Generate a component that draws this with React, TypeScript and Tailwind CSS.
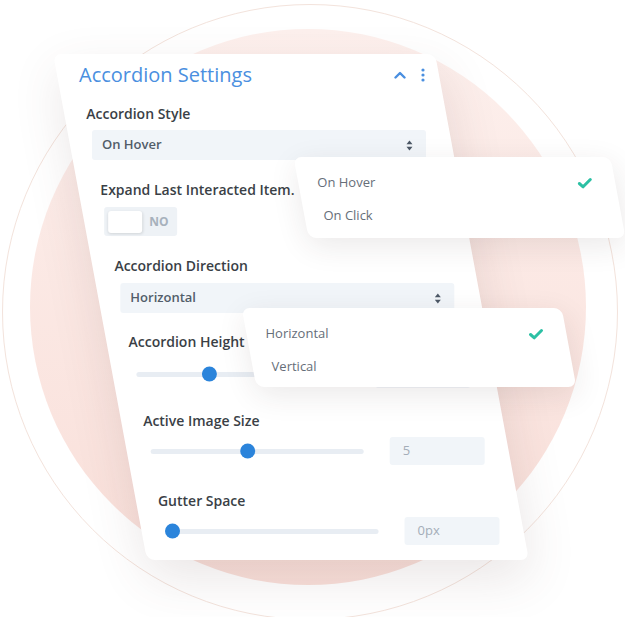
import React from 'react';

const labelCls = 'h-[20px] leading-[20px] text-[14px] font-semibold text-[#3a3f46] whitespace-nowrap skew-x-[-10.5deg]';

function SelectArrows() {
    return (
        <svg width="7" height="11" viewBox="0 0 7 11" fill="#4c5866">
            <path d="M3.5 0.5 L6.5 4.2 H0.5Z" />
            <path d="M3.5 10.5 L6.5 6.8 H0.5Z" />
        </svg>
    );
}

function Check() {
    return (
        <svg width="15" height="12" viewBox="0 0 15 12">
            <path d="M2 6.5 L5.8 9.8 L13 2.5" stroke="#2cc0a4" strokeWidth="3" fill="none" strokeLinecap="round" strokeLinejoin="round" />
        </svg>
    );
}

function Select({ value, className = '' }: { value: string; className?: string }) {
    return (
        <div className={`h-[30px] bg-[#f1f5f9] rounded-[3px] pl-[10px] pr-[13px] flex items-center justify-between text-[13px] font-semibold text-[#525d6a] skew-x-[-10.5deg] ${className}`}>
            <span>{value}</span>
            <SelectArrows />
        </div>
    );
}

function Slider({ pos, value, className = '' }: { pos: number; value: string; className?: string }) {
    return (
        <div className={`h-[28px] flex items-center justify-between skew-x-[-10.5deg] ${className}`}>
            <div className="relative ml-[2px] w-[213px] h-[5px] rounded-full bg-[#e8edf3]">
                <div
                    className="absolute top-1/2 w-[15px] h-[15px] -translate-x-1/2 -translate-y-1/2 rounded-full bg-[#2b84db]"
                    style={{ left: pos }}
                />
            </div>
            <div className="-mr-[2px] w-[95px] h-[28px] bg-[#f1f5f9] rounded-[3px] pl-[13px] flex items-center text-[13px] text-[#a4adb8]">
                {value}
            </div>
        </div>
    );
}

function Popup({ items, className }: { items: string[]; className: string }) {
    return (
        <div className={`absolute bg-white rounded-[8px] skew-x-[10.5deg] shadow-[0_8px_30px_rgba(60,40,40,0.10)] pt-[16px] ${className}`}>
            {items.map((item, i) => (
                <div
                    key={item}
                    className={`h-[20px] flex items-center justify-between pl-[19px] pr-[23px] skew-x-[-10.5deg] text-[13px] font-medium text-[#666e79] ${i > 0 ? 'mt-[13px]' : ''}`}
                >
                    <span>{item}</span>
                    {i === 0 && <Check />}
                </div>
            ))}
        </div>
    );
}

export default function App() {
    return (
        <div className="relative w-[625px] h-[617px] overflow-hidden bg-white" style={{ fontFamily: '"Open Sans", "Noto Sans", sans-serif' }}>
            <div className="absolute left-[2px] top-[4px] w-[616px] h-[616px] rounded-full border border-[#f3e3dc]" />
            <div className="absolute left-[30px] top-[29px] w-[556px] h-[556px] rounded-full bg-gradient-to-b from-[#fdf0ed] to-[#f9dfd9]" />

            <div className="relative pt-[54px] pl-[100px]">
                <div className="w-[382px] h-[506px] bg-white rounded-[8px] skew-x-[10.5deg] shadow-[0_18px_50px_rgba(90,60,60,0.13)] pt-[7px] pl-[22px] pr-[26px] flex flex-col">
                    <div className="h-[28px] -mr-[12px] flex items-center justify-between skew-x-[-10.5deg]">
                        <span className="text-[20px] text-[#4a8fe0] whitespace-nowrap">Accordion Settings</span>
                        <div className="flex items-center gap-[15px]">
                            <svg width="12" height="8" viewBox="0 0 12 8">
                                <path d="M1.5 6.5 L6 2 L10.5 6.5" stroke="#4a8fe0" strokeWidth="2.4" fill="none" strokeLinecap="round" strokeLinejoin="round" />
                            </svg>
                            <svg width="4" height="14" viewBox="0 0 4 14" fill="#4a8fe0">
                                <circle cx="2" cy="2" r="1.6" />
                                <circle cx="2" cy="7" r="1.6" />
                                <circle cx="2" cy="12" r="1.6" />
                            </svg>
                        </div>
                    </div>

                    <div className={`${labelCls} mt-[15px]`}>Accordion Style</div>
                    <Select value="On Hover" className="mt-[6px]" />

                    <div className={`${labelCls} mt-[20px]`}>Expand Last Interacted Item.</div>
                    <div className="mt-[7px] -ml-[2px] w-[73px] h-[29px] rounded-[3px] bg-[#eef2f6] flex items-center pl-[4px] gap-[7px] skew-x-[-10.5deg]">
                        <div className="w-[34px] h-[22px] rounded-[3px] bg-white shadow-[0_1px_3px_rgba(0,0,0,0.12)]" />
                        <span className="text-[12px] font-bold text-[#a7b1bc]">NO</span>
                    </div>

                    <div className={`${labelCls} mt-[20px]`}>Accordion Direction</div>
                    <Select value="Horizontal" className="mt-[7px]" />

                    <div className={`${labelCls} mt-[19px]`}>Accordion Height</div>
                    <Slider pos={73} value="" className="mt-[8px]" />

                    <div className={`${labelCls} mt-[23px]`}>Active Image Size</div>
                    <Slider pos={97} value="5" className="mt-[6px]" />

                    <div className={`${labelCls} mt-[26px]`}>Gutter Space</div>
                    <Slider pos={7} value="0px" className="mt-[6px]" />
                </div>
            </div>

            <Popup items={['On Hover', 'On Click']} className="left-[301px] top-[157px] w-[317px] h-[81px]" />
            <Popup items={['Horizontal', 'Vertical']} className="left-[249px] top-[308px] w-[320px] h-[79px]" />
        </div>
    );
}
